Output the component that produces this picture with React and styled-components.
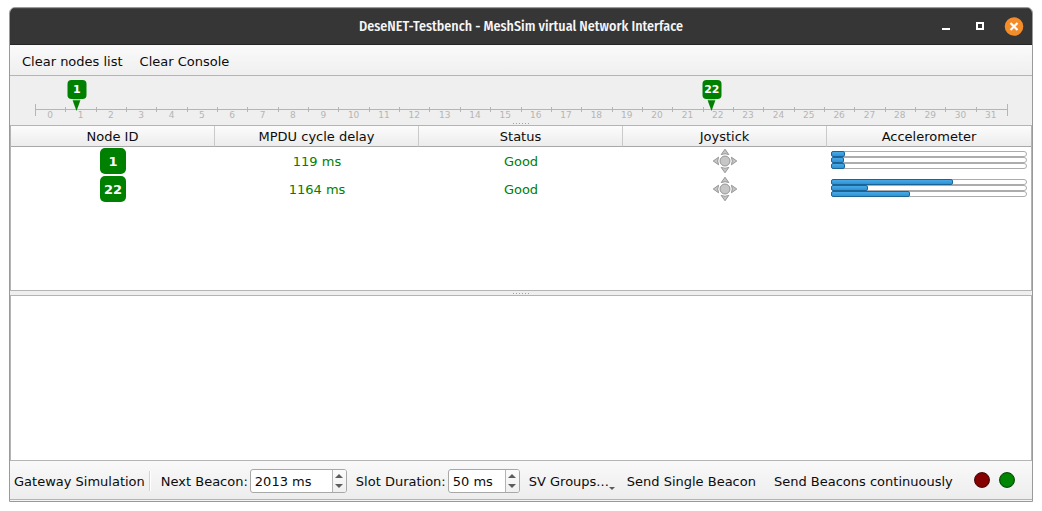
import React from "react";
import styled, { createGlobalStyle } from "styled-components";

const GlobalStyle = createGlobalStyle`
  * { box-sizing: border-box; }
  body {
    margin: 0;
    background: #fff;
    color: #0c0c0c;
    font: 13px/16px "DejaVu Sans", sans-serif;
  }
  button, input { font: inherit; color: inherit; }
`;

const Page = styled.div`
  display: flex;
  min-height: 100vh;
  padding: 7px 9px 9px;
`;

const Window = styled.main`
  flex: 1;
  display: flex;
  flex-direction: column;
  min-width: 0;
  background: #efefef;
  border: 1px solid #9a9a9a;
  border-radius: 6px 6px 0 0;
  overflow: hidden;
`;

const TitleBar = styled.header`
  display: grid;
  grid-template-columns: 1fr auto 1fr;
  align-items: center;
  height: 37px;
  padding: 0 8px;
  background: #363636;
  border-top: 1px solid #484848;
  border-bottom: 1px solid #262626;
`;

const Title = styled.h1`
  grid-column: 2;
  margin: 0;
  color: #f6f6f6;
  font: 500 14px/20px "Fira Sans SemiCondensed", "Fira Sans Condensed", Roboto, sans-serif;
`;

const WindowControls = styled.div`
  display: flex;
  justify-content: flex-end;
  align-items: center;
  gap: 14px;
`;

const WindowButton = styled.button`
  display: flex;
  padding: 0;
  border: 0;
  background: none;
`;

const MenuBar = styled.nav`
  display: flex;
  align-items: center;
  gap: 17px;
  height: 31px;
  padding: 2px 12px 0;
  background: linear-gradient(#fafafa, #efefef);
  border-bottom: 1px solid #b4b4b4;
`;

const FlatButton = styled.button`
  padding: 2px 0 0;
  border: 0;
  background: none;
  line-height: 16px;
  white-space: nowrap;
`;

const Scale = styled.section`
  height: 45px;
  padding: 28px 24px 0 25px;
`;

const Track = styled.ol`
  position: relative;
  display: flex;
  height: 12px;
  margin: 0;
  padding: 0;
  list-style: none;
  color: #b5b5b5;
  border: solid #b5b5b5;
  border-width: 0 1px;
  background: linear-gradient(#b5b5b5, #b5b5b5) 0 5px / 100% 1px no-repeat;
`;

const Slot = styled.li`
  position: relative;
  flex: 1 1 0;
  padding: 5px 2px 0 0;
  font-size: 9px;
  line-height: 12px;
  text-align: center;

  & + &::before {
    content: "";
    position: absolute;
    left: -1px;
    top: 3px;
    width: 1px;
    height: 5px;
    background: #b5b5b5;
  }
`;

const Pin = styled.li`
  position: absolute;
  bottom: 5px;
  display: flex;
  flex-direction: column;
  align-items: center;
  transform: translateX(-50%);
`;

const Badge = styled.span`
  display: inline-flex;
  align-items: center;
  justify-content: center;
  width: ${(p) => (p.$small ? 19 : 26)}px;
  height: ${(p) => (p.$small ? 19 : 26)}px;
  padding-top: ${(p) => (p.$small ? 0 : 2)}px;
  border-radius: ${(p) => (p.$small ? 4 : 5)}px;
  background: #008000;
  color: #fff;
  font-size: ${(p) => (p.$small ? 11 : 13)}px;
  font-weight: bold;
`;

const Grip = styled.div`
  display: flex;
  justify-content: center;
  align-items: center;
  gap: 2px;
  height: 4px;
  flex: none;

  i {
    width: 1px;
    height: 1px;
    background: #a0a0a0;
  }
`;

const Pane = styled.section`
  flex: 1 0 120px;
  background: #fff;
  border: 1px solid #b4b4b4;
`;

const NodeTable = styled.table`
  width: 100%;
  table-layout: fixed;
  border-collapse: separate;
  border-spacing: 0;
  text-align: center;
`;

const HeadCell = styled.th`
  height: 21px;
  padding: 2px 0 0;
  font-weight: normal;
  background: linear-gradient(#fcfcfc, #ececec);
  border-bottom: 1px solid #a8a8a8;

  &:not(:last-child) { border-right: 1px solid #cacaca; }
`;

const Cell = styled.td`
  height: 28px;
  padding: 0 4px;
  color: #008000;

  svg, span { vertical-align: middle; }
`;

const TextCell = styled(Cell)`
  padding-top: 2px;
`;

const MeterCell = styled(Cell)`
  padding-bottom: 2px;
`;

const Meter = styled.div`
  height: 6px;
  border: 1px solid #acacac;
  border-radius: 3px;
  background: #fff;
`;

const MeterFill = styled.div`
  height: 6px;
  margin: -1px;
  border: 1px solid #1c6496;
  border-radius: 2px;
  background: linear-gradient(#48aae8, #2f92d4);
`;

const ToolBar = styled.footer`
  display: flex;
  align-items: center;
  height: 39px;
  padding: 2px 4px 0;
  white-space: nowrap;
  background: linear-gradient(#f9f9f9, #ededed);
  border-bottom: 1px solid #b4b4b4;

  label { padding-top: 2px; }
`;

const ToolBarTitle = styled.span`
  padding-top: 2px;
`;

const BottomEdge = styled.div`
  height: 1px;
  background: #f4f4f4;
`;

const Group = styled.div`
  display: flex;
  align-items: center;
  gap: ${(p) => p.$gap || 0}px;
  margin-left: ${(p) => p.$before || 0}px;
`;

const Divider = styled.div`
  width: 2px;
  height: 20px;
  margin: 0 10px 0 4px;
  background: #d2d2d2;
  border-right: 1px solid #fff;
`;

const SpinFrame = styled.div`
  display: flex;
  width: ${(p) => p.$width}px;
  height: 24px;
  border: 1px solid #a8a8a8;
  border-radius: 3px;
  background: #fff;
  overflow: hidden;
`;

const SpinInput = styled.input`
  flex: 1;
  min-width: 0;
  padding: 2px 4px 0;
  border: 0;
  outline: 0;
  background: none;
`;

const Steps = styled.div`
  display: flex;
  flex-direction: column;
  width: 14px;
  padding: 1px 0;
  border-left: 1px solid #b4b4b4;
  background: linear-gradient(#fbfbfb, #f0f0f0);
`;

const StepButton = styled.button`
  flex: 1;
  display: flex;
  justify-content: center;
  align-items: center;
  padding: 0;
  border: 0;
  background: none;
`;

const MenuButton = styled(FlatButton)`
  display: flex;
  align-items: flex-end;
`;

const Led = styled.span`
  width: 16px;
  height: 16px;
  margin-bottom: 2px;
  border-radius: 50%;
  background: radial-gradient(circle at center, ${(p) => p.$color} 58%, ${(p) => p.$edge} 100%);
  border: 1px solid ${(p) => p.$edge};
`;

const nodes = [
  { id: 1, delay: "119 ms", status: "Good", pin: 4.2, axes: [7, 6.5, 7] },
  { id: 22, delay: "1164 ms", status: "Good", pin: 69.6, axes: [63, 19, 40.5] },
];
const columns = ["Node ID", "MPDU cycle delay", "Status", "Joystick", "Accelerometer"];

const Joystick = () => (
  <svg width="26" height="26" viewBox="0 0 26 26" role="img" aria-label="Joystick">
    <g fill="#c6c6c6" stroke="#8f8f8f" strokeWidth="0.9">
      <path d="M13 1.2 L16.8 6.6 Q13 4.8 9.2 6.6 Z" />
      <path d="M13 24.8 L16.8 19.4 Q13 21.2 9.2 19.4 Z" />
      <path d="M1.2 13 L6.6 9.2 Q4.8 13 6.6 16.8 Z" />
      <path d="M24.8 13 L19.4 9.2 Q21.2 13 19.4 16.8 Z" />
      <circle cx="13" cy="13" r="5" />
    </g>
  </svg>
);

const Arrow = ({ up, small }) => (
  <svg width={small ? 6 : 8} height={small ? 3 : 4} viewBox="0 0 8 4">
    <path d={up ? "M0 4 L4 0 L8 4 Z" : "M0 0 L4 4 L8 0 Z"} fill="#5c5c5c" />
  </svg>
);

const Dots = () => (
  <Grip>
    {[0, 1, 2, 3, 4, 5].map((n) => <i key={n} />)}
  </Grip>
);

const SpinBox = ({ id, value, width }) => (
  <SpinFrame $width={width}>
    <SpinInput id={id} defaultValue={value} />
    <Steps>
      <StepButton aria-label="Increase"><Arrow up /></StepButton>
      <StepButton aria-label="Decrease"><Arrow /></StepButton>
    </Steps>
  </SpinFrame>
);

export default function App() {
  return (
    <Page>
      <GlobalStyle />
      <Window>
        <TitleBar>
          <Title>DeseNET-Testbench - MeshSim virtual Network Interface</Title>
          <WindowControls>
            <WindowButton aria-label="Minimize">
              <svg width="20" height="20"><path d="M6 12h8" stroke="#fff" strokeWidth="2" /></svg>
            </WindowButton>
            <WindowButton aria-label="Maximize">
              <svg width="20" height="20"><rect x="7" y="6" width="6" height="6" fill="none" stroke="#fff" strokeWidth="2" /></svg>
            </WindowButton>
            <WindowButton aria-label="Close">
              <svg width="20" height="20">
                <circle cx="10" cy="9.5" r="9.3" fill="#f48c2a" />
                <path d="M6.5 6l7 7M13.5 6l-7 7" stroke="#fff" strokeWidth="2.2" />
              </svg>
            </WindowButton>
          </WindowControls>
        </TitleBar>
        <MenuBar>
          <FlatButton>Clear nodes list</FlatButton>
          <FlatButton>Clear Console</FlatButton>
        </MenuBar>
        <Scale>
          <Track>
            {Array.from({ length: 32 }, (_, n) => <Slot key={n}>{n}</Slot>)}
            {nodes.map((node) => (
              <Pin key={node.id} style={{ left: `${node.pin}%` }}>
                <Badge $small>{node.id}</Badge>
                <svg width="8" height="12"><path d="M0 1h8L4 12z" fill="#008000" /><path d="M0 1h8" stroke="#7dbb7d" /></svg>
              </Pin>
            ))}
          </Track>
        </Scale>
        <Dots />
        <Pane>
          <NodeTable>
            <thead>
              <tr>{columns.map((c) => <HeadCell key={c} scope="col">{c}</HeadCell>)}</tr>
            </thead>
            <tbody>
              {nodes.map((node) => (
                <tr key={node.id}>
                  <Cell><Badge>{node.id}</Badge></Cell>
                  <TextCell>{node.delay}</TextCell>
                  <TextCell>{node.status}</TextCell>
                  <Cell><Joystick /></Cell>
                  <MeterCell>
                    {node.axes.map((v, i) => (
                      <Meter key={i} role="meter" aria-label={`Axis ${i + 1}`} aria-valuenow={v}>
                        <MeterFill style={{ width: `${v}%` }} />
                      </Meter>
                    ))}
                  </MeterCell>
                </tr>
              ))}
            </tbody>
          </NodeTable>
        </Pane>
        <Dots />
        <Pane aria-label="Console" />
        <ToolBar>
          <ToolBarTitle>Gateway Simulation</ToolBarTitle>
          <Divider />
          <Group $gap={2}>
            <label htmlFor="beacon">Next Beacon:</label>
            <SpinBox id="beacon" value="2013 ms" width={97} />
          </Group>
          <Group $gap={2} $before={9}>
            <label htmlFor="slot">Slot Duration:</label>
            <SpinBox id="slot" value="50 ms" width={72} />
          </Group>
          <Group $gap={18} $before={9}>
            <Group $gap={12}>
              <MenuButton>SV Groups...<Arrow small /></MenuButton>
              <FlatButton>Send Single Beacon</FlatButton>
            </Group>
            <FlatButton>Send Beacons continuously</FlatButton>
          </Group>
          <Group $gap={9} $before={21}>
            <Led $color="#860000" $edge="#4a0606" />
            <Led $color="#008600" $edge="#064a06" />
          </Group>
        </ToolBar>
        <BottomEdge />
      </Window>
    </Page>
  );
}
